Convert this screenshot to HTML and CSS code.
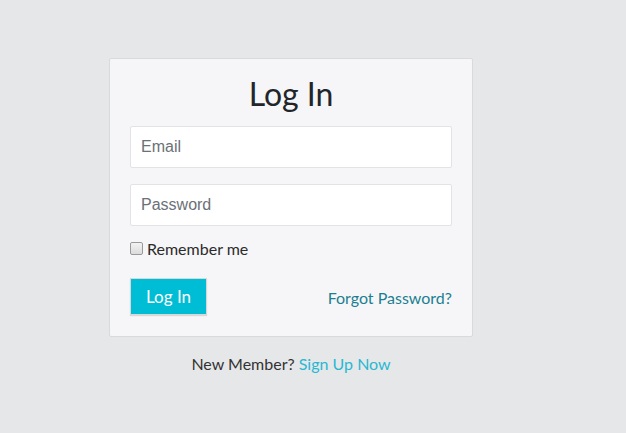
FILE: index.html
```html
<!DOCTYPE html>
<html>
<head>
<meta charset="utf-8">
<link rel="stylesheet" href="styles.css">
</head>
<body>
<main class="page">
  <div class="column">
    <form class="card">
      <h1 class="title">Log In</h1>
      <input class="field" type="email" placeholder="Email">
      <input class="field field-last" type="password" placeholder="Password">
      <label class="remember"><input class="check" type="checkbox"> Remember me</label>
      <div class="actions">
        <button class="btn" type="button">Log In</button>
        <a class="forgot" href="#">Forgot Password?</a>
      </div>
    </form>
    <p class="signup">New Member? <a class="signup-link" href="#">Sign Up Now</a></p>
  </div>
</main>
</body>
</html>
```
FILE: styles.css
```css
html, body {
  margin: 0;
  padding: 0;
  background: #e6e7e9;
  font-family: Lato, "Open Sans", sans-serif;
  color: #333;
}
.page {
  padding: 58px 0 0 109px;
}
.column {
  width: 364px;
  display: flex;
  flex-direction: column;
  align-items: center;
}
.card {
  box-sizing: border-box;
  width: 364px;
  background: #f6f6f8;
  border: 1px solid #d9dadc;
  border-radius: 2px;
  padding: 20px 20px 21px;
  display: flex;
  flex-direction: column;
}
.title {
  margin: 0 0 17px;
  text-align: center;
  font-weight: 400;
  font-size: 32px;
  line-height: 30px;
  color: #22262b;
}
.field {
  box-sizing: border-box;
  height: 42px;
  width: 100%;
  margin: 0 0 16px;
  padding: 0 10px;
  border: 1px solid #e2e3e5;
  border-radius: 2px;
  background: #fff;
  font-family: "Liberation Sans", Arial, sans-serif;
  font-size: 16px;
  color: #333;
  outline: none;
}
.field-last {
  margin-bottom: 13px;
}
.field::placeholder {
  color: #6b7178;
}
.remember {
  display: flex;
  align-items: center;
  gap: 4px;
  font-size: 16px;
  color: #2b2b2b;
  margin: 0 0 20px;
}
.check {
  appearance: none;
  box-sizing: border-box;
  margin: 0;
  width: 13px;
  height: 13px;
  border: 1px solid #9a9a9a;
  border-radius: 2px;
  background: linear-gradient(#f2f2f2, #dcdcdc);
}
.actions {
  display: flex;
  justify-content: space-between;
  align-items: center;
}
.btn {
  box-sizing: border-box;
  width: 77px;
  height: 37px;
  background: #00bdd6;
  border: 1px solid #d6d8da;
  border-radius: 0;
  color: #fff;
  font-family: Lato, sans-serif;
  font-size: 17px;
  box-shadow: 0 1px 1px rgba(0,0,0,0.12);
  padding: 0;
}
.forgot {
  color: #1c7f91;
  text-decoration: none;
  font-size: 16px;
  margin-top: 1px;
}
.signup {
  margin: 17px 0 0;
  font-size: 16px;
  color: #333;
}
.signup-link {
  color: #29b8d2;
  text-decoration: none;
}
```
